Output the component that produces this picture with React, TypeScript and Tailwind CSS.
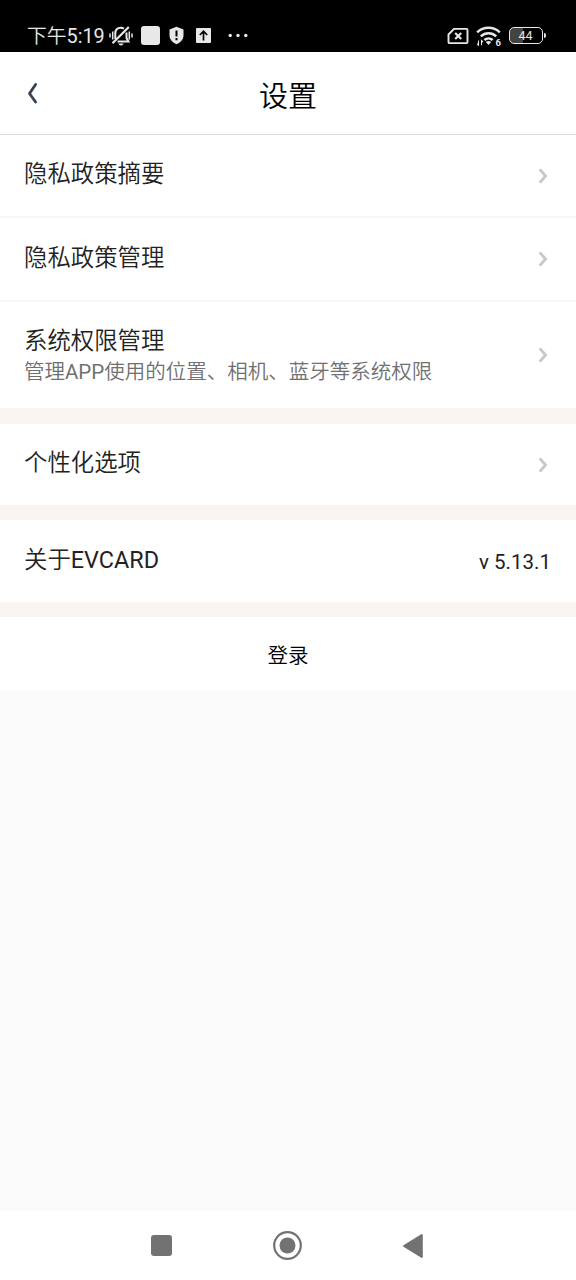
import type { ReactNode } from 'react'

type RowProps = {
  title: ReactNode
  children?: ReactNode
  className: string
}

function StatusBar() {
  return (
    <div className="flex h-[52px] items-start bg-black pr-[30px] pl-[27px] text-[#e8e8e8]">
      <span className="mt-[23px] w-[82px] text-[19.8px] leading-7 whitespace-nowrap">
        <span className="font-[350]">下午</span>5:19
      </span>

      {/* Muted bell */}
      <svg className="mt-[25px] h-[21px] w-6" viewBox="0 0 24 21" fill="none" stroke="currentColor">
        <path d="M1 8.500v4M3.700 6.500v8M20.300 6.500v8M23 8.500v4" strokeWidth="1.500" />
        <path d="M6.300 14V8.500c0-3.800 2-5.700 5.500-5.700 1.300 0 2.300.3 3.200.8M17.500 7.500V13l2 3.600H8.500" strokeWidth="2" />
        <path d="M3.500 18.200 19.800 2" strokeWidth="2.200" />
        <path d="M9.300 18.500h5.400c-.6 1.300-1.500 1.900-2.700 1.900s-2.100-.6-2.700-1.900z" fill="currentColor" stroke="none" />
      </svg>
      <span className="mt-[26px] ml-2 size-[19px] rounded-[3px] bg-[#e8e8e8]" />
      <svg className="mt-[26px] ml-[9px] h-[19px] w-[15px]" viewBox="0 0 15 19">
        <path d="M7.500.8 14.500 3.500V9c0 4.500-3 7.800-7 9.200C3.500 16.800.500 13.500.500 9V3.500z" fill="currentColor" />
        <path d="M7.500 4.500v6M7.500 12v2.200" stroke="#000" strokeWidth="2" />
      </svg>
      <svg className="mt-7 ml-3 size-[15px]" viewBox="0 0 15 15">
        <rect width="15" height="15" rx="1" fill="currentColor" />
        <path d="M7.500 12.500V3.500M3.800 7l3.700-3.700L11.200 7" fill="none" stroke="#000" strokeWidth="1.700" />
      </svg>
      <svg className="mt-[33px] ml-[17px] h-[5px] w-5" viewBox="0 0 20 5" fill="currentColor">
        <circle cx="2.200" cy="2.500" r="1.700" />
        <circle cx="10" cy="2.500" r="1.700" />
        <circle cx="17.800" cy="2.500" r="1.700" />
      </svg>

      <div className="ml-auto flex items-start">
        {/* No SIM */}
        <svg className="mt-[27px] h-[18px] w-[22px]" viewBox="0 0 22 18" fill="none" stroke="currentColor" strokeWidth="1.900">
          <path d="M7 1.900h12.500q1 0 1 1v12.200q0 1-1 1h-17q-1 0-1-1V7.500z" strokeLinejoin="round" />
          <path d="m8.200 6 6 6M14.200 6l-6 6" strokeWidth="2.200" />
        </svg>
        {/* Wi-Fi 6 */}
        <svg className="mt-[26px] ml-[7px] h-5 w-[26px]" viewBox="0 0 26 20" fill="none" stroke="currentColor" strokeWidth="2.500">
          <path d="M1.200 6.300a16.500 16.500 0 0 1 22.600 0M4.800 10.300a11.200 11.200 0 0 1 15.400 0M8.400 14a6 6 0 0 1 8.200 0" />
          <path d="m9.800 16 2.700 3 2.700-3q-2.700-2.200-5.400 0z" fill="currentColor" stroke="none" />
          <path d="M2.500 14.500v4.700l-1.500-1.500M5.500 19.200v-4.700L7 16" strokeWidth="1.100" />
          <text x="19.500" y="19.500" fontSize="9.500" fontWeight="700" fill="currentColor" stroke="none">6</text>
        </svg>
        <div className="mt-[27px] ml-[7px] flex items-center">
          <div className="flex h-[17px] w-[34px] items-center justify-center rounded-[5px] border-[1.500px] border-[#e8e8e8] bg-linear-to-r from-[#444] from-40% to-black to-40% pr-px text-[12.5px] leading-[15px]">
            44
          </div>
          <span className="ml-px h-[5px] w-[2px] rounded-r bg-[#e8e8e8]" />
        </div>
      </div>
    </div>
  )
}

function Chevron() {
  return (
    <svg className="mr-[3px] h-4 w-[9px]" viewBox="0 0 9 16" fill="none" stroke="#c8c8c8" strokeWidth="2.800" strokeLinecap="round" strokeLinejoin="round">
      <path d="M1.500 2.300 6.600 8l-5.100 5.700" />
    </svg>
  )
}

function Row({ title, children, className }: RowProps) {
  return (
    <div className={`flex items-center justify-between bg-white pr-[25px] pl-6 ${className}`}>
      <span className="-mt-[3px] text-[23.4px] leading-8 font-[350]">{title}</span>
      {children}
    </div>
  )
}

export default function App() {
  return (
    <div className="flex h-[1280px] w-[576px] flex-col overflow-hidden bg-[#fafafa] font-['Roboto','Noto_Sans_CJK_SC',sans-serif] text-[#222]">
      <StatusBar />

      <header className="grid h-[83px] grid-cols-[1fr_auto_1fr] items-center border-b border-[#dcdcdc] bg-white px-6">
        <svg className="ml-[3px] h-[22px] w-3" viewBox="0 0 12 22" fill="none" stroke="#34434f" strokeWidth="2.800" strokeLinecap="round" strokeLinejoin="round">
          <path d="M8.600 2.500 2.500 11.500l6.100 8.500" />
        </svg>
        <h1 className="pt-2 text-[29px] leading-10 font-[350] text-black">设置</h1>
      </header>

      <main>
        <Row title="隐私政策摘要" className="h-[83px] border-b-2 border-[#f7f7f7]">
          <Chevron />
        </Row>
        <Row title="隐私政策管理" className="h-[84px] border-b-2 border-[#f6f6f6]">
          <Chevron />
        </Row>
        <div className="flex h-[106px] items-center justify-between bg-white pr-[25px] pl-6">
          <div className="pt-0.5 font-[350]">
            <div className="text-[23.4px] leading-8">系统权限管理</div>
            <div className="text-[20.5px] leading-[30px] text-[#707070]">
              管理<span className="font-normal">APP</span>使用的位置、相机、蓝牙等系统权限
            </div>
          </div>
          <Chevron />
        </div>

        <div className="space-y-[15px] bg-[#f7f4f2] pt-4">
          <Row title="个性化选项" className="h-[81px]">
            <Chevron />
          </Row>
          <Row title={<>关于<span className="font-normal">EVCARD</span></>} className="h-[82px]">
            <span className="pt-px text-[20.5px] leading-7">v 5.13.1</span>
          </Row>
          <button className="block h-[74px] w-full bg-white pt-1 text-[20.5px] leading-7 font-[350] text-black">登录</button>
        </div>
      </main>

      <nav className="mt-auto flex h-[69px] items-center bg-white pl-[151px] text-[#727272]">
        <span className="size-[21px] rounded-[3px] bg-current" />
        <svg className="ml-[101px] size-[29px]" viewBox="0 0 29 29">
          <circle cx="14.500" cy="14.500" r="13.300" fill="none" stroke="currentColor" strokeWidth="2.200" />
          <circle cx="14.500" cy="14.500" r="8" fill="currentColor" />
        </svg>
        <svg className="ml-[100px] h-[26px] w-[22px]" viewBox="0 0 22 26">
          <path d="M19.800 2v22L2 13z" fill="currentColor" stroke="currentColor" strokeWidth="2" strokeLinejoin="round" />
        </svg>
      </nav>
    </div>
  )
}
